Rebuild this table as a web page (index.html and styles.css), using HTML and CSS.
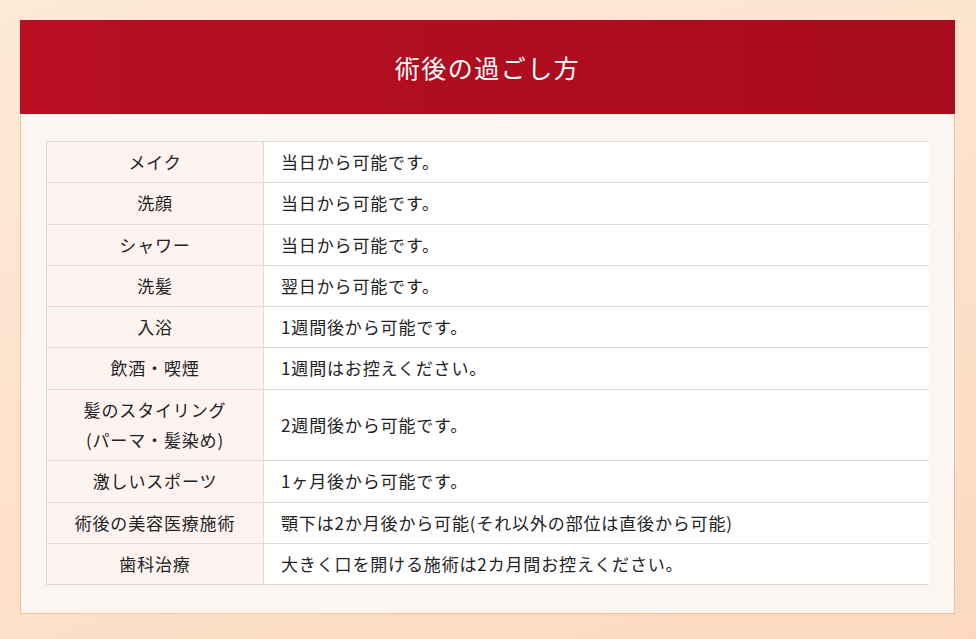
FILE: index.html
```html
<!DOCTYPE html>
<html lang="ja">
<head>
<meta charset="utf-8">
<title>術後の過ごし方</title>
<link rel="stylesheet" href="styles.css">
</head>
<body>
<section class="card">
  <h2 class="card-title">術後の過ごし方</h2>
  <div class="card-body">
    <table class="care-table">
      <tbody>
        <tr><th>メイク</th><td>当日から可能です。</td></tr>
        <tr><th>洗顔</th><td>当日から可能です。</td></tr>
        <tr><th>シャワー</th><td>当日から可能です。</td></tr>
        <tr><th>洗髪</th><td>翌日から可能です。</td></tr>
        <tr><th>入浴</th><td>1週間後から可能です。</td></tr>
        <tr><th>飲酒・喫煙</th><td>1週間はお控えください。</td></tr>
        <tr><th>髪のスタイリング<br>(パーマ・髪染め)</th><td>2週間後から可能です。</td></tr>
        <tr><th>激しいスポーツ</th><td>1ヶ月後から可能です。</td></tr>
        <tr><th>術後の美容医療施術</th><td>顎下は2か月後から可能(それ以外の部位は直後から可能)</td></tr>
        <tr><th>歯科治療</th><td>大きく口を開ける施術は2カ月間お控えください。</td></tr>
      </tbody>
    </table>
  </div>
</section>
</body>
</html>
```

FILE: styles.css
```css
html, body {
  margin: 0;
  padding: 0;
}
body {
  width: 976px;
  height: 639px;
  overflow: hidden;
  background: linear-gradient(160deg, #fde9d8 0%, #fde2cc 50%, #fcd9be 100%);
  font-family: "Noto Sans CJK JP", "Noto Sans", sans-serif;
  color: #222;
  padding-top: 20px;
  box-sizing: border-box;
}
.card {
  margin: 0 21px 0 20px;
  border: 1px solid #efc29c;
  border-top: none;
  background: #fcf6f2;
}
.card-title {
  height: 94px;
  display: flex;
  align-items: center;
  justify-content: center;
  background: linear-gradient(90deg, #b90f22 0%, #ad0d1f 60%, #a80c1d 100%);
  color: #fff;
  font-size: 25px;
  font-weight: 400;
  letter-spacing: 0.06em;
  margin: 0 -1px;
}
.card-body {
  padding: 27px 25px 28px 25px;
}
.care-table {
  width: 883px;
  border-collapse: collapse;
  font-size: 17px;
  line-height: 30.3px;
  letter-spacing: 0.05em;
}
.care-table th,
.care-table td {
  border: 1px solid #e2dada;
  padding: 5px 17px;
  font-weight: 400;
}
.care-table th {
  width: 182px;
  text-align: center;
  background: #fdf3f1;
}
.care-table td {
  background: #fff;
  border-right: none;
  text-align: left;
}
```
